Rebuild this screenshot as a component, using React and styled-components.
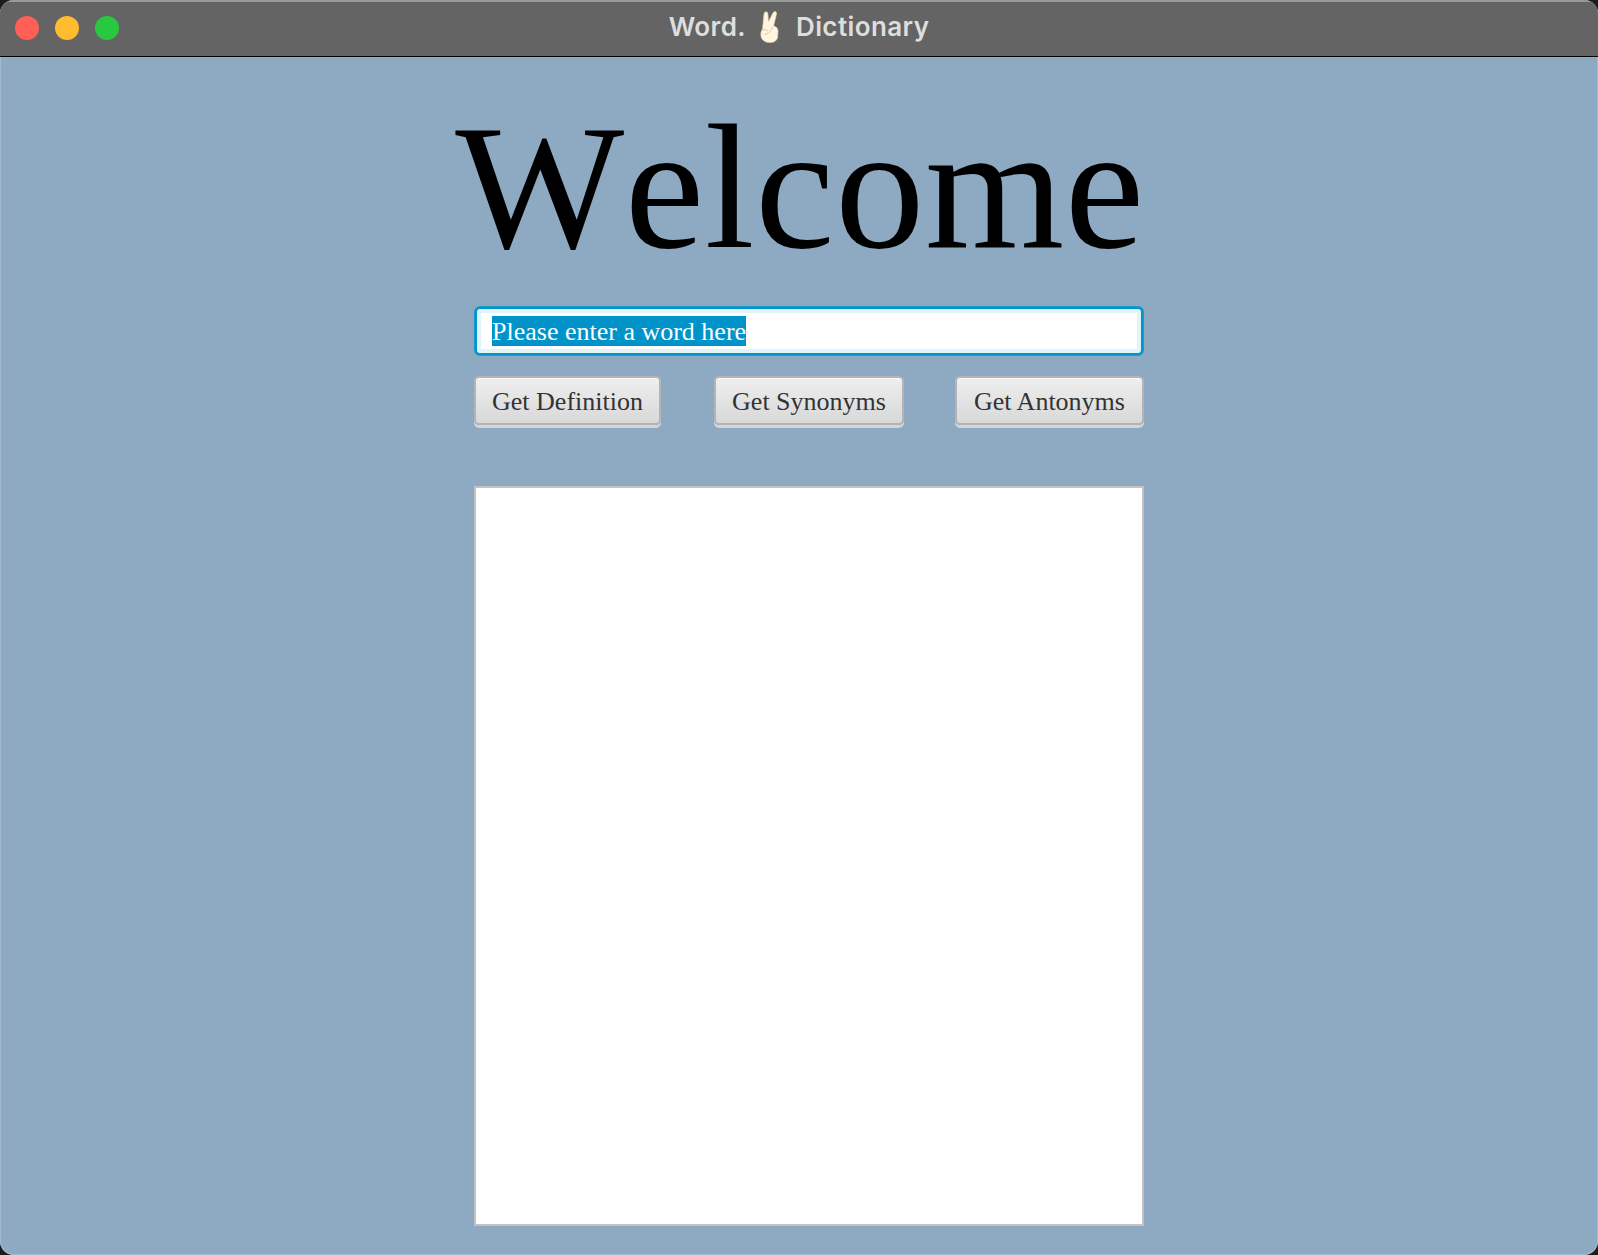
import styled, { createGlobalStyle } from "styled-components";

const GlobalStyle = createGlobalStyle`
  html, body {
    margin: 0;
    padding: 0;
    background: #1c1c1e;
  }
`;

const AppWindow = styled.div`
  width: 1598px;
  height: 1255px;
  box-sizing: border-box;
  border-radius: 14px;
  overflow: hidden;
  background: #8eaac3;
  box-shadow: inset 0 0 0 1px #a3bbd0;
  display: flex;
  flex-direction: column;
`;

const TitleBar = styled.header`
  height: 57px;
  flex: none;
  box-sizing: border-box;
  padding-bottom: 5px;
  position: relative;
  display: flex;
  align-items: center;
  justify-content: center;
  background: #646464;
  border-top: 2px solid #9a9a9a;
  border-bottom: 1px solid #000;
  color: #dedede;
  font-family: Inter, "Liberation Sans", sans-serif;
  font-weight: 600;
  font-size: 26px;
  letter-spacing: 0.4px;
`;

const Lights = styled.div`
  position: absolute;
  left: 15px;
  top: 14px;
  display: flex;
  gap: 16px;
`;

const Light = styled.span`
  width: 24px;
  height: 24px;
  border-radius: 50%;
  background: ${(p) => p.$color};
`;

const Content = styled.main`
  flex: 1;
  display: flex;
  flex-direction: column;
  font-family: "Liberation Serif", "Times New Roman", serif;
`;

const Heading = styled.h1`
  margin: 27px 0 0;
  padding-left: 2px;
  height: 222px;
  font-size: 179px;
  line-height: 206px;
  font-kerning: none;
  letter-spacing: 0.5px;
  font-weight: 400;
  text-align: center;
  color: #000;
  white-space: nowrap;
`;

const Form = styled.div`
  width: 670px;
  margin-left: 474px;
  display: flex;
  flex-direction: column;
`;

const WordInput = styled.div`
  height: 48px;
  margin: 1px;
  box-sizing: border-box;
  display: flex;
  align-items: center;
  padding-left: 15px;
  background: #fff;
  border: 2px solid #0096cc;
  border-radius: 5px;
  box-shadow: inset 0 0 0 4px #e2f4fb, 0 0 0 1px rgba(0, 150, 204, 0.8);
  font-size: 26px;
`;

const Selected = styled.span`
  display: inline-block;
  height: 30px;
  background: #0093c9;
  color: #fff;
  line-height: 32px;
`;

const ButtonRow = styled.div`
  margin-top: 20px;
  display: flex;
`;

const ActionButton = styled.button`
  width: ${(p) => p.$width}px;
  margin-left: ${(p) => p.$gap || 0}px;
  height: 49px;
  box-sizing: border-box;
  padding: 2px 0 0;
  border: 2px solid #b4b4b4;
  border-radius: 5px;
  background: linear-gradient(#efefef, #d8d8d8);
  box-shadow: inset 0 1px 0 #f8f8f8, 0 3px 0 #d2d6da;
  color: #333;
  font-family: inherit;
  font-size: 26px;
`;

const ResultPanel = styled.div`
  margin-top: 61px;
  height: 740px;
  box-sizing: border-box;
  background: #fff;
  border: 2px solid #c2c2c2;
`;

const HandIcon = styled.svg`
  margin: 0 16px 0 12px;
`;

// victory hand, no emoji font in the sandbox
const VictoryHand = () => (
  <HandIcon width="22" height="32" viewBox="0 0 24 32" preserveAspectRatio="none">
    <path
      d="M5 18 L6.6 3 Q7 0.6 9 0.8 Q10.8 1.2 10.8 3.4 L11.4 11 L16.6 1.6 Q17.8 0 19.4 0.8 Q20.6 1.8 20 3.6 L17 15 Q21.6 16 21.8 20 L21.4 26 Q20.6 31.4 13 31.6 Q5.4 31.4 3.4 26 Q2.2 21 5 18 Z"
      fill="#fff5e0"
      stroke="#f3d9ad"
      strokeWidth="0.7"
    />
    <path
      d="M5 19 Q9 17.4 11 20 M7 23.5 Q11 23.5 14 19.5 Q15 17.5 16 16"
      fill="none"
      stroke="#e6c493"
      strokeWidth="1"
    />
  </HandIcon>
);

export default function App() {
  return (
    <>
      <GlobalStyle />
      <AppWindow>
        <TitleBar>
          <Lights>
            <Light $color="#ff5f57" />
            <Light $color="#febc2e" />
            <Light $color="#28c840" />
          </Lights>
          <span>Word.</span>
          <VictoryHand />
          <span>Dictionary</span>
        </TitleBar>
        <Content>
          <Heading>Welcome</Heading>
          <Form>
            <WordInput>
              <Selected>Please enter a word here</Selected>
            </WordInput>
            <ButtonRow>
              <ActionButton $width={187}>Get Definition</ActionButton>
              <ActionButton $width={190} $gap={53}>Get Synonyms</ActionButton>
              <ActionButton $width={189} $gap={51}>Get Antonyms</ActionButton>
            </ButtonRow>
            <ResultPanel />
          </Form>
        </Content>
      </AppWindow>
    </>
  );
}
